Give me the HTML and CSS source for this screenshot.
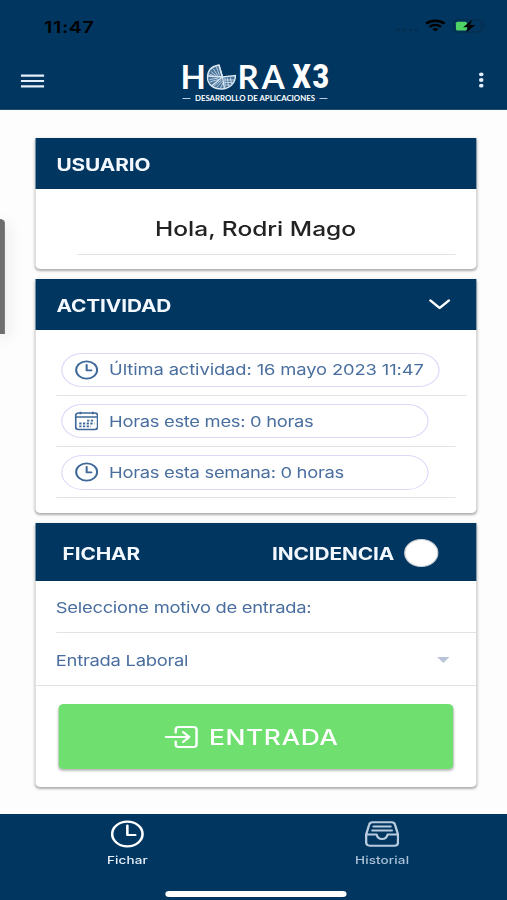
FILE: index.html
```html
<!DOCTYPE html>
<html lang="es">
<head>
    <meta charset="UTF-8">
    <meta name="viewport" content="width=device-width, initial-scale=1.0">
    <title>HORAX3 - Fichar</title>
    <link rel="stylesheet" href="styles.css">
</head>
<body>
    <div class="screen">
        <header class="header">
            <div class="status-bar">
                <span class="time">11:47</span>
                <div class="status-icons">
                    <span class="signal">....</span>
                    <svg class="wifi" viewBox="0 0 17 13" fill="none" stroke="#000" stroke-width="2.4">
                        <path d="M1 4.6C5.2 .7 11.8 .7 16 4.6"/>
                        <path d="M3.9 7.8C6.6 5.3 10.4 5.3 13.1 7.8"/>
                        <path d="M6.1 10L8.5 12.6L10.9 10C9.6 8.8 7.4 8.8 6.1 10Z" fill="#000" stroke="none"/>
                    </svg>
                    <svg class="battery" viewBox="0 0 27 14">
                        <rect x=".5" y="1" width="23" height="12" rx="3.5" fill="none" stroke="#062c4b"/>
                        <path d="M25 5.2Q27 7 25 8.8Z" fill="#062c4b"/>
                        <rect x="2.3" y="2.7" width="9" height="8.8" rx="1.5" fill="#4fd365"/>
                        <path d="M15.6 .8L8.2 8.2H12.4L10.6 13.4L18.2 6H13.8Z" fill="#000"/>
                    </svg>
                </div>
            </div>
            <div class="toolbar">
                <svg class="menu-icon" viewBox="0 0 20 14" fill="none" stroke="#e4eefa" stroke-width="2.3">
                    <path d="M0 1.5H20M0 7H20M0 12.5H20"/>
                </svg>
                <div class="logo">
                    <div class="logo-inner">
                        <div class="logo-name">
                            <span class="logo-h">H</span>
                            <svg class="logo-mark" viewBox="0 0 30 26" fill="none" stroke="#dbe8f3">
                                <path d="M12.5 1C4 2.5 1 8 1 13.5C1 20.5 7 25 15 25C23.5 25 29 19 29 11.5L16 13Z" fill="#48739a" stroke-width="1.4"/>
                                <path d="M16 13L1.5 12M16 13L5 22M16 13L18 25M12.5 1L16 13" stroke-width="1.3"/>
                                <path d="M10 3L13 11.5M7 5L11.5 12M4.5 7.5L10 12M3 10L7 11.8M3 15.5L12 14M3 18L12 15.5M7 22.5L15 16M10 23.5L16 17M14 24L16.5 19M18.5 14V23.5M21 14L22 22.5M24 13.5L25 20.5M18 16H28M18 18.5H27M19 21H24" stroke-width=".8"/>
                            </svg>
                            <span class="logo-ra">RA</span>
                            <b class="logo-x3">X3</b>
                        </div>
                        <div class="logo-tagline">DESARROLLO DE APLICACIONES</div>
                    </div>
                </div>
                <svg class="more-icon" viewBox="0 0 4 16" fill="#e4eefa">
                    <circle cx="2" cy="2.3" r="1.9"/>
                    <circle cx="2" cy="8" r="1.9"/>
                    <circle cx="2" cy="13.7" r="1.9"/>
                </svg>
            </div>
        </header>

        <main class="content">
            <section class="card user-card">
                <h2 class="card-header">USUARIO</h2>
                <p class="greeting"><span>Hola, Rodri Mago</span></p>
            </section>

            <section class="card activity-card">
                <h2 class="card-header">
                    ACTIVIDAD
                    <svg class="chevron" viewBox="0 0 18 11" fill="none" stroke="#fff" stroke-width="2.2" stroke-linecap="round" stroke-linejoin="round">
                        <path d="M1.5 1.5L9 9L16.5 1.5"/>
                    </svg>
                </h2>
                <ul class="activity-list">
                    <li class="activity-row wide">
                        <div class="chip">
                            <svg viewBox="0 0 20 20" fill="none" stroke="#3e6898" stroke-width="1.7" stroke-linecap="round" stroke-linejoin="round">
                                <circle cx="10" cy="10" r="8.8"/>
                                <path d="M10 4.7V10.4H14"/>
                            </svg>
                            <span class="last">Última actividad: 16 mayo 2023 11:47</span>
                        </div>
                    </li>
                    <li class="activity-row">
                        <div class="chip">
                            <svg viewBox="0 0 20 20" fill="none" stroke="#3e6898" stroke-width="1.5">
                                <rect x=".8" y="1.8" width="18.4" height="16.9" rx="2.5"/>
                                <path d="M1 5.8H19M4.8 .4V3M15.2 .4V3"/>
                                <path d="M10.4 9.6H16.5M3.8 12.6H16.5M3.8 15.5H13.5" stroke-width="1.9" stroke-dasharray="1.9 1.2"/>
                            </svg>
                            <span>Horas este mes: 0 horas</span>
                        </div>
                    </li>
                    <li class="activity-row">
                        <div class="chip">
                            <svg viewBox="0 0 20 20" fill="none" stroke="#3e6898" stroke-width="1.7" stroke-linecap="round" stroke-linejoin="round">
                                <circle cx="10" cy="10" r="8.8"/>
                                <path d="M10 4.7V10.4H14"/>
                            </svg>
                            <span>Horas esta semana: 0 horas</span>
                        </div>
                    </li>
                </ul>
            </section>

            <section class="card clock-card">
                <h2 class="card-header">
                    FICHAR
                    <span class="incident">INCIDENCIA <i class="incident-toggle"></i></span>
                </h2>
                <div class="field-label">Seleccione motivo de entrada:</div>
                <div class="field-select">Entrada Laboral <i class="caret"></i></div>
                <button class="entry-button">
                    <svg viewBox="0 0 28 24" fill="none" stroke="#fff" stroke-width="2" stroke-linecap="round" stroke-linejoin="round">
                        <path d="M9.5 7.5V4.5Q9.5 2 12 2H24Q26.5 2 26.5 4.5V19.5Q26.5 22 24 22H12Q9.5 22 9.5 19.5V16.5"/>
                        <path d="M1.5 12H20.5M15.5 7L20.5 12L15.5 17"/>
                    </svg>
                    <span>ENTRADA</span>
                </button>
            </section>
        </main>

        <nav class="tab-bar">
            <a class="tab active">
                <svg viewBox="0 0 28 28" fill="none" stroke="#fff" stroke-width="2.1" stroke-linecap="round" stroke-linejoin="round">
                    <circle cx="14" cy="14" r="12.4"/>
                    <path d="M14 5.5V15H20.5"/>
                </svg>
                <span>Fichar</span>
            </a>
            <a class="tab">
                <svg viewBox="0 0 28 28" fill="none" stroke="#b9ccdf" stroke-width="1.9" stroke-linecap="round" stroke-linejoin="round">
                    <path d="M3.5 4.5Q4 2.2 6.2 2.2H21.8Q24 2.2 24.5 4.5L27 14.5V22.5Q27 25.8 24 25.8H4Q1 25.8 1 22.5V14.5Z"/>
                    <path d="M1 14.5H9.5Q10.4 19 14 19T18.5 14.5H27M7 6.5H21M6 10.5H22"/>
                </svg>
                <span>Historial</span>
            </a>
            <div class="home-indicator"></div>
        </nav>

        <div class="side-handle"></div>
    </div>
</body>
</html>
```
FILE: styles.css
```css
:root {
    --navy: #00365f;
    --blue-text: #4a6f9f;
    --line: #e2e2e4;
    --chip-border: #dcdafa;
    --green: #6fe070;
}

* {
    margin: 0;
    padding: 0;
    box-sizing: border-box;
}

body {
    font-family: Inter, "Liberation Sans", sans-serif;
    background: #fdfdfd;
    overflow: hidden;
}

.screen {
    position: relative;
    display: flex;
    flex-direction: column;
    width: 414px;
    height: 900px;
    transform: scaleX(1.22464);
    transform-origin: 0 0;
}

.header {
    height: 110px;
    background: var(--navy);
    border-bottom: 1px solid #1c4c72;
}

.status-bar {
    display: flex;
    justify-content: space-between;
    height: 54px;
    padding: 18px 17px 0 36px;
}

.time {
    font-size: 16px;
    font-weight: 600;
    line-height: 19px;
    letter-spacing: 0.5px;
}

.status-icons {
    display: flex;
    align-items: flex-start;
}

.signal {
    margin-right: 4px;
    color: #062c4b;
    font-size: 14px;
    font-weight: 700;
    line-height: 15px;
    letter-spacing: 0.4px;
}

.wifi {
    width: 17px;
    height: 13px;
    margin-right: 6px;
    margin-top: 1px;
}

.battery {
    width: 27px;
    height: 14px;
    margin-top: 1px;
}

.toolbar {
    display: grid;
    grid-template-columns: 1fr auto 1fr;
    align-items: center;
    height: 54px;
    padding: 0 19px 0 16.5px;
}

.menu-icon {
    width: 19.5px;
    height: 14px;
}

.more-icon {
    width: 4px;
    height: 16px;
    justify-self: end;
    margin-bottom: 3px;
}

.logo {
    width: 118px;
    height: 42px;
    padding-top: 3px;
    margin-left: 4.5px;
    color: #fff;
}

/* the logo keeps its own proportions */
.logo-inner {
    width: 145px;
    transform: scaleX(0.81657);
    transform-origin: 0 0;
}

.logo-name {
    display: flex;
    align-items: center;
    height: 27px;
    font-family: Lato, sans-serif;
    font-size: 33px;
    font-weight: 700;
    line-height: 27px;
}

.logo-h {
    width: 24px;
    margin-left: -2px;
}

.logo-mark {
    flex: none;
    width: 30px;
    height: 26px;
    margin-left: 2px;
}

.logo-ra {
    flex: none;
    width: 55px;
    margin-left: 1px;
    letter-spacing: 3px;
}

.logo-x3 {
    font-family: Roboto, sans-serif;
    font-size: 34px;
    letter-spacing: 2px;
    transform: scaleX(0.84);
    transform-origin: 0 0;
}

.logo-tagline {
    display: flex;
    align-items: center;
    justify-content: space-between;
    margin-top: 4px;
    font-family: Lato, sans-serif;
    font-size: 7.8px;
    font-weight: 700;
    line-height: 8px;
    white-space: nowrap;
}

.logo-tagline::before,
.logo-tagline::after {
    content: '';
    width: 8px;
    height: 1px;
    background: #b9ccdf;
}

.content {
    display: flex;
    flex: 1;
    flex-direction: column;
    gap: 10px;
    padding: 28px 25px 0 28.6px;
}

.card {
    width: 360.3px;
    background: #fff;
    border-radius: 0 0 4px 4px;
    box-shadow: 0 2px 2px rgba(0, 0, 0, 0.24), 0 1px 4px rgba(0, 0, 0, 0.14);
}

.card-header {
    display: flex;
    align-items: center;
    justify-content: space-between;
    height: 51px;
    padding: 3px 21px 0 17.5px;
    background: var(--navy);
    color: #f3f8ff;
    font-size: 17px;
    font-weight: 700;
    letter-spacing: -0.1px;
}

.user-card {
    height: 131px;
}

.greeting {
    height: 66px;
    margin: 0 17px 0 34px;
    padding: 28px 0 0;
    border-bottom: 1px solid var(--line);
    color: #222;
    font-size: 20px;
    font-weight: 500;
    line-height: 25px;
}

.greeting span {
    margin-left: 64px;
}

.activity-card {
    height: 234px;
}

.chevron {
    width: 18px;
    height: 11px;
    margin-top: -3px;
}

.activity-list {
    padding: 14.6px 0 0 17px;
    list-style: none;
}

.activity-row {
    width: 326.5px;
    height: 51.3px;
    padding: 8px 22px 0 4.5px;
    border-bottom: 1px solid var(--line);
}

.activity-row.wide {
    width: 335px;
}

.chip {
    display: flex;
    align-items: center;
    gap: 9px;
    height: 34.5px;
    padding-left: 9.5px;
    border: 1.5px solid var(--chip-border);
    border-radius: 17.5px;
    color: var(--blue-text);
    font-size: 15px;
    letter-spacing: -0.25px;
    white-space: nowrap;
}

.chip .last {
    letter-spacing: -0.1px;
}

.chip svg {
    flex: none;
    width: 19.5px;
    height: 20px;
}

.clock-card {
    height: 264px;
}

.clock-card .card-header {
    height: 58px;
    padding: 3px 31px 0 22.5px;
}

.incident {
    display: flex;
    align-items: center;
    gap: 8px;
}

.incident-toggle {
    width: 28px;
    height: 28px;
    margin-top: -2px;
    background: #fff;
    border: 1px solid #c9ced4;
    border-radius: 50%;
}

.field-label,
.field-select {
    display: flex;
    align-items: center;
    height: 52px;
    padding-top: 2px;
    color: var(--blue-text);
    font-size: 15px;
    letter-spacing: -0.22px;
    border-bottom: 1px solid var(--line);
}

.field-label {
    margin-left: 17px;
}

.field-select {
    justify-content: space-between;
    height: 53px;
    padding: 2px 21.5px 0 17px;
}

.caret {
    width: 0;
    height: 0;
    border: 5px solid transparent;
    border-top: 6px solid #b8c4d6;
    border-bottom: 0;
}

.entry-button {
    display: flex;
    align-items: center;
    gap: 9px;
    width: 322px;
    height: 65px;
    margin: 18px 0 0 19px;
    padding-left: 86px;
    background: var(--green);
    border: 0;
    border-radius: 4px;
    box-shadow: 0 2px 2px rgba(0, 0, 0, 0.26);
    color: #fff;
    font-family: inherit;
    font-size: 21.5px;
    font-weight: 500;
    letter-spacing: 0.5px;
}

.entry-button svg {
    width: 28px;
    height: 24px;
}

.tab-bar {
    position: relative;
    display: flex;
    height: 86px;
    padding-left: 2px;
    background: var(--navy);
}

.tab {
    display: flex;
    flex: 1;
    flex-direction: column;
    align-items: center;
    gap: 5px;
    padding-top: 6px;
    color: #a9c1d8;
    font-size: 11px;
    font-weight: 500;
    line-height: 14px;
    letter-spacing: 0.1px;
}

.tab + .tab {
    padding-left: 4px;
}

.tab svg {
    width: 28px;
    height: 28px;
}

.tab.active {
    color: #e6f0fa;
}

.home-indicator {
    position: absolute;
    left: 135px;
    bottom: 3.5px;
    width: 148px;
    height: 5.5px;
    background: #fff;
    border-radius: 3px;
}

.side-handle {
    position: absolute;
    left: 0;
    top: 219px;
    width: 3.5px;
    height: 115px;
    background: #6e6e6e;
    border-radius: 0 4px 0 0;
    box-shadow: 0 4px 14px rgba(0, 0, 0, 0.2);
}
```
